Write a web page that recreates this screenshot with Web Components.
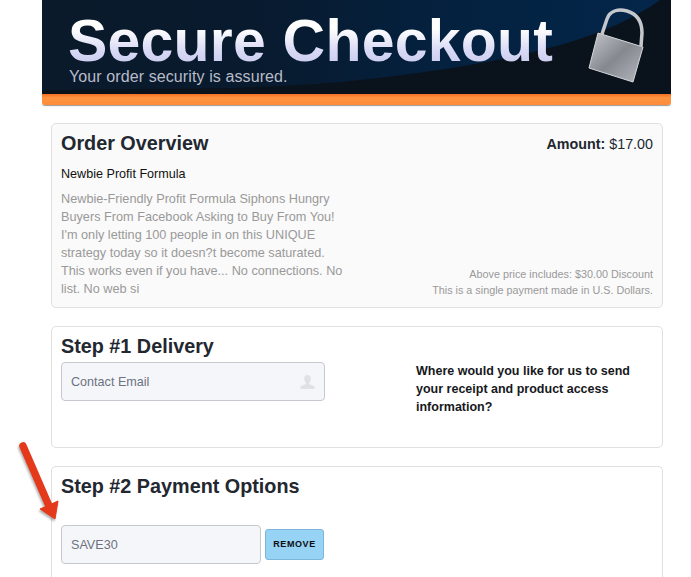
<!DOCTYPE html>
<html><head><meta charset="utf-8">
<style>
html,body{margin:0;padding:0;background:#fff;height:577px;overflow:hidden}
body{font-family:"Liberation Sans",Arial,sans-serif;color:#222730}
</style></head><body>
<template id="t-banner"><style>
:host{display:block;height:106px;position:relative}
.dark{height:94px;background:#0a121c;position:relative;overflow:hidden;box-sizing:border-box;padding:16px 0 0 26px}
.swoosh{position:absolute;left:0;top:0;width:100%;height:100%}
h1{position:relative;margin:0;height:50px;font:bold 59px/50px "Liberation Sans",Arial,sans-serif;white-space:nowrap;
 background:linear-gradient(180deg,#ffffff 25%,#d8d9f5 70%,#c9cbee 100%);-webkit-background-clip:text;background-clip:text;color:transparent;letter-spacing:.2px;width:max-content}
p{position:relative;margin:2px 0 0 1px;font:16px/18px "Liberation Sans",Arial,sans-serif;color:#b8bcc8;letter-spacing:.1px}
.lock{position:absolute;left:543px;top:5px}
.bar{height:11px;box-sizing:border-box;background:linear-gradient(180deg,#f36f22 0,#ff9440 35%,#fd8c3a 100%);border-radius:0 0 3px 3px;box-shadow:0 1px 1px #9a9a9a}
</style>
<div class="dark">
<svg class="swoosh" viewBox="0 0 629 94" preserveAspectRatio="none"><defs><linearGradient id="g" x1="0" x2="1"><stop offset="0" stop-color="#0a1a2b"/><stop offset=".35" stop-color="#081a2e"/><stop offset=".65" stop-color="#04213f"/><stop offset="1" stop-color="#03264a"/></linearGradient></defs>
<path d="M0 0H618C590 20 560 32 525 43C460 62 390 72 318 80C280 84 240 86 190 88L0 90Z" fill="url(#g)"/></svg>
<h1>Secure Checkout</h1><p>Your order security is assured.</p>
<svg class="lock" width="66" height="80" viewBox="0 0 66 80"><defs><linearGradient id="m" x1="0" y1="0" x2="1" y2="1"><stop offset="0" stop-color="#c4c7cc"/><stop offset=".5" stop-color="#85888f"/><stop offset="1" stop-color="#b4b7bc"/></linearGradient></defs>
<path d="M17 29 22 14C25 5 34 4 42 6 52 9 57 17 57 28L56 41" fill="none" stroke="#c4c7cc" stroke-width="3.5"/>
<path d="M13 28 58 42 48 77 4 63Z" fill="url(#m)" stroke="#d5d7da" stroke-width="1" stroke-linejoin="round"/>
</svg>
</div><div class="bar"></div></template>

<template id="t-card"><style>
:host{display:block;box-sizing:border-box;border:1px solid #e0e0e0;border-radius:5px;margin:0 0 18px 9px;width:612px;padding:6px 9px 0;background:var(--card-bg,#fff)}
</style><slot></slot></template>

<template id="t-overview"><style>
:host{display:block}
.row{display:flex;justify-content:space-between;align-items:flex-start}
h2{margin:0;font:bold 19.8px/26px "Liberation Sans",Arial,sans-serif;color:#222730}
.amt{font-size:14.3px;line-height:16px;margin-top:6px;color:#222730}
.name{font-size:12.6px;line-height:18px;color:#111;margin-top:9px}
.body{display:flex;justify-content:space-between;align-items:flex-end;margin-top:7px;padding-bottom:9px}
.desc{width:285px;font-size:12.7px;line-height:18px;color:#999}
.note{font-size:10.8px;line-height:16px;color:#999;text-align:right}
</style>
<div class="row"><h2>Order Overview</h2><div class="amt"><b>Amount:</b> $17.00</div></div>
<div class="name">Newbie Profit Formula</div>
<div class="body"><div class="desc">Newbie-Friendly Profit Formula Siphons Hungry Buyers From Facebook Asking to Buy From You! I'm only letting 100 people in on this UNIQUE strategy today so it doesn?t become saturated. This works even if you have... No connections. No list. No web si</div>
<div class="note">Above price includes: $30.00 Discount<br>This is a single payment made in U.S. Dollars.</div></div></template>

<template id="t-field"><style>
:host{display:block;box-sizing:border-box;width:var(--w,264px);height:39px;border:1px solid #c6c8cf;border-radius:4px;background:#f5f6fa;position:relative;font-size:12.6px;line-height:38px;color:#6c7280;padding-left:9px}
svg{position:absolute;right:9px;top:12px}
</style><slot></slot><svg part="icon" width="15" height="14" viewBox="0 0 15 14"><path d="M7.5 0C9.6 0 10.8 1.6 10.8 3.8 10.8 5.6 10 7 9.2 7.8V9L14.5 11.2V14H.5V11.2L5.8 9V7.8C5 7 4.2 5.6 4.2 3.8 4.2 1.6 5.4 0 7.5 0Z" fill="#e0e1e3"/></svg></template>

<template id="t-code"><style>
:host{display:block;box-sizing:border-box;width:200px;height:39px;border:1px solid #c6c8cf;border-radius:4px;background:#f5f6fa;font-size:12.6px;line-height:38px;color:#6c7280;padding-left:9px}
</style><slot></slot></template>

<template id="t-btn"><style>
:host{display:block;box-sizing:border-box;width:59px;height:31px;border:1px solid #7db5dc;border-radius:3px;background:#97d3f5;font:bold 9px/29px "Liberation Sans",Arial,sans-serif;letter-spacing:.6px;text-align:center;color:#0d0d10}
</style><slot></slot></template>

<template id="t-page"><style>
:host{display:block;width:629px;margin-left:42px;position:relative;height:577px;overflow:hidden}
main{padding-top:17px}
h2{margin:0;font:bold 19.8px/26px "Liberation Sans",Arial,sans-serif;color:#222730}
.s1{display:flex;height:114px;box-sizing:border-box}
.s1 .l{width:355px}
.help{font:bold 12.5px/18px "Liberation Sans",Arial,sans-serif;color:#16181c;width:225px;margin-top:29px}
.codes{display:flex;align-items:center;gap:4px;margin-top:26px}
.arrow{position:absolute;left:-26px;top:440px;filter:drop-shadow(-1px 2px 1px rgba(0,0,0,.3))}
x-card.last{margin-bottom:0;height:111px;border-bottom:0;border-radius:5px 5px 0 0}
</style>
<x-banner></x-banner>
<main>
<x-card style="--card-bg:#fafafa"><x-overview></x-overview></x-card>
<x-card><div class="s1"><div class="l"><h2>Step #1 Delivery</h2><x-field style="margin-top:3px">Contact Email</x-field></div><div class="help">Where would you like for us to send your receipt and product access information?</div></div></x-card>
<x-card class="last"><h2>Step #2 Payment Options</h2><div class="codes"><x-code>SAVE30</x-code><x-btn>REMOVE</x-btn></div></x-card>
</main>
</template>
<template id="t-root"><style>:host{display:block;position:relative;height:577px}
.arrow{position:absolute;left:16px;top:440px;filter:drop-shadow(-1px 2px 1px rgba(0,0,0,.3))}</style>
<x-page></x-page>
<svg class="arrow" width="48" height="84" viewBox="0 0 48 84"><path d="M7 6 33 66" stroke="#e5391c" stroke-width="7.5" stroke-linecap="round" fill="none"/><path d="M24 69 42 61 39 79Z" fill="#e5391c" stroke="#e5391c" stroke-linejoin="round"/></svg>
</template>
<x-root></x-root>
<script>
for(const [tag,id] of [['x-banner','t-banner'],['x-card','t-card'],['x-overview','t-overview'],['x-field','t-field'],['x-code','t-code'],['x-btn','t-btn'],['x-page','t-page'],['x-root','t-root']]){
 customElements.define(tag,class extends HTMLElement{constructor(){super();this.attachShadow({mode:'open'}).appendChild(document.getElementById(id).content.cloneNode(true));}});
}
</script>
</body></html>
